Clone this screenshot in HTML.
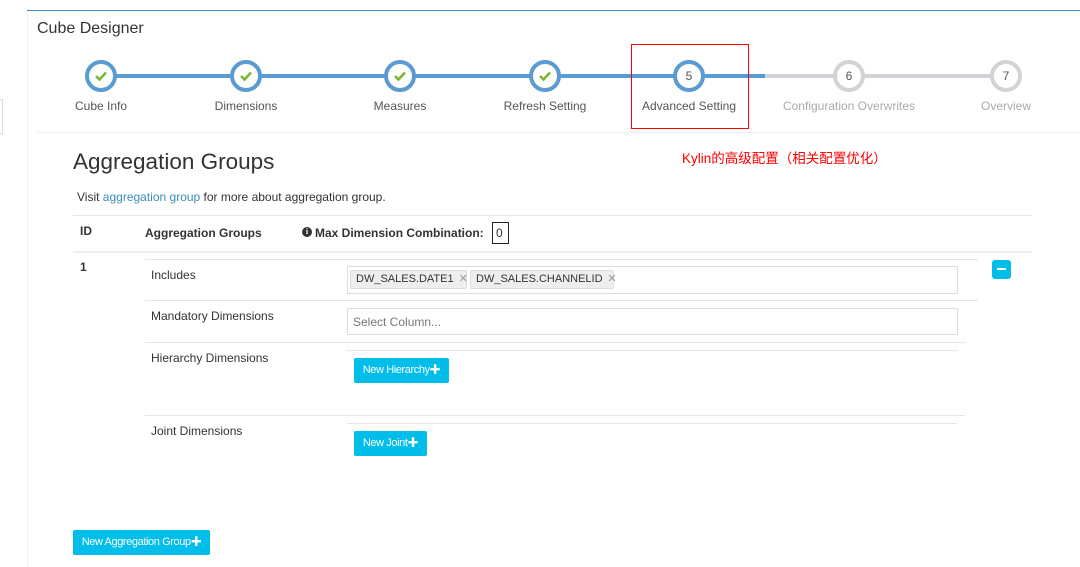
<!DOCTYPE html>
<html><head><meta charset="utf-8"><style>
*{margin:0;padding:0;box-sizing:border-box}
body{width:1080px;height:567px;background:#fff;position:relative;overflow:hidden;font-family:"Liberation Sans","Noto Sans CJK SC",sans-serif;color:#333}
.a{position:absolute}
.t{position:absolute;white-space:nowrap;font-size:12px;line-height:14px}
.c{position:absolute;width:32px;height:32px;border-radius:50%;border:4px solid #5a9bd1;background:#fff;top:60px;text-align:center;font-size:12px;line-height:24px;color:#555}
.g{border-color:#d2d3d6}
.h{position:absolute;height:1px;background:#e5e5e5}
.lab{position:absolute;top:99px;font-size:12px;line-height:14px;color:#555;white-space:nowrap;transform:translateX(-50%)}
.btn{position:absolute;background:#00bde9;color:#fff;border-radius:2px;font-size:11px;letter-spacing:-0.4px;text-align:center;line-height:24px}
.tag{position:absolute;top:270px;height:19px;background:#eee;border:1px solid #ddd;font-size:11px;line-height:17px;color:#333;padding-left:5px;border-radius:2px}
.tag span{color:#999;margin-left:5px}
</style></head><body>
<div class="a" style="left:27px;top:10px;width:1053px;height:1px;background:#3c8dbc"></div>
<div class="a" style="left:27px;top:11px;width:1px;height:556px;background:#f4f4f4"></div>
<div class="a" style="left:0;top:99px;width:3px;height:35px;border:1px solid #ddd;border-left:none"></div>
<div class="t" style="left:37px;top:20px;font-size:16px;line-height:18px;color:#333">Cube Designer</div>
<div class="a" style="left:101px;top:74px;width:664px;height:4px;background:#5a9bd1"></div>
<div class="a" style="left:765px;top:74px;width:241px;height:4px;background:#d2d3d6"></div>
<div class="c" style="left:85px"><svg width="14" height="12" viewBox="0 0 14 12" style="margin-top:6px"><path d="M2 6l3.5 3.5L12 2.5" stroke="#7cb537" stroke-width="2.6" fill="none"/></svg></div>
<div class="c" style="left:230px"><svg width="14" height="12" viewBox="0 0 14 12" style="margin-top:6px"><path d="M2 6l3.5 3.5L12 2.5" stroke="#7cb537" stroke-width="2.6" fill="none"/></svg></div>
<div class="c" style="left:384px"><svg width="14" height="12" viewBox="0 0 14 12" style="margin-top:6px"><path d="M2 6l3.5 3.5L12 2.5" stroke="#7cb537" stroke-width="2.6" fill="none"/></svg></div>
<div class="c" style="left:529px"><svg width="14" height="12" viewBox="0 0 14 12" style="margin-top:6px"><path d="M2 6l3.5 3.5L12 2.5" stroke="#7cb537" stroke-width="2.6" fill="none"/></svg></div>
<div class="c" style="left:673px">5</div>
<div class="c g" style="left:833px">6</div>
<div class="c g" style="left:990px">7</div>
<div class="lab" style="left:101px">Cube Info</div>
<div class="lab" style="left:246px">Dimensions</div>
<div class="lab" style="left:400px">Measures</div>
<div class="lab" style="left:545px">Refresh Setting</div>
<div class="lab" style="left:689px">Advanced Setting</div>
<div class="lab" style="left:849px;color:#aaa">Configuration Overwrites</div>
<div class="lab" style="left:1006px;color:#aaa">Overview</div>
<div class="a" style="left:631px;top:44px;width:118px;height:85px;border:1.5px solid #f00"></div>
<div class="h" style="left:37px;top:132px;width:1043px;background:#eee"></div>
<div class="t" style="left:73px;top:149px;font-size:22.5px;line-height:26px;color:#333">Aggregation Groups</div>
<div class="t" style="left:682px;top:151px;font-size:13.5px;line-height:16px;color:#f00">Kylin的高级配置（相关配置优化）</div>
<div class="t" style="left:77px;top:190px">Visit <span style="color:#3c8dbc">aggregation group</span> for more about aggregation group.</div>
<div class="h" style="left:73px;top:215px;width:959px"></div>
<div class="t" style="left:80px;top:224px;font-weight:bold">ID</div>
<div class="t" style="left:145px;top:226px;font-weight:bold">Aggregation Groups</div>
<div class="a" style="left:302px;top:227px;width:10px;height:10px;border-radius:50%;background:#333;color:#fff;font-size:8px;line-height:10px;text-align:center;font-weight:bold;font-family:'Liberation Serif',serif">i</div>
<div class="t" style="left:315px;top:226px;font-weight:bold">Max Dimension Combination:</div>
<div class="a" style="left:492px;top:222px;width:17px;height:22px;border:1px solid #222;font-size:12px;line-height:20px;padding-left:3px">0</div>
<div class="h" style="left:73px;top:251px;width:959px;height:2px;background:#eee"></div>
<div class="t" style="left:80px;top:260px;font-weight:bold">1</div>
<div class="h" style="left:145px;top:259px;width:833px"></div>
<div class="t" style="left:151px;top:268px">Includes</div>
<div class="a" style="left:347px;top:266px;width:611px;height:28px;border:1px solid #ddd"></div>
<div class="tag" style="left:350px;width:117px">DW_SALES.DATE1<span>✕</span></div>
<div class="tag" style="left:470px;width:144px">DW_SALES.CHANNELID<span>✕</span></div>
<div class="a" style="left:992px;top:260px;width:19px;height:19px;background:#00bde9;border-radius:3px"><div class="a" style="left:5px;top:8px;width:9px;height:2px;background:#fff"></div></div>
<div class="h" style="left:145px;top:300px;width:833px"></div>
<div class="t" style="left:151px;top:309px">Mandatory Dimensions</div>
<div class="a" style="left:347px;top:308px;width:611px;height:27px;border:1px solid #ddd;font-size:12px;line-height:26px;padding-left:5px;color:#777">Select Column...</div>
<div class="h" style="left:145px;top:342px;width:820px"></div>
<div class="h" style="left:347px;top:350px;width:610px"></div>
<div class="t" style="left:151px;top:351px">Hierarchy Dimensions</div>
<div class="btn" style="left:354px;top:358px;width:95px;height:25px">New Hierarchy✚</div>
<div class="h" style="left:145px;top:415px;width:820px"></div>
<div class="h" style="left:347px;top:423px;width:610px"></div>
<div class="t" style="left:151px;top:424px">Joint Dimensions</div>
<div class="btn" style="left:354px;top:431px;width:73px;height:25px">New Joint✚</div>
<div class="btn" style="left:73px;top:530px;width:137px;height:25px">New Aggregation Group✚</div>
</body></html>
